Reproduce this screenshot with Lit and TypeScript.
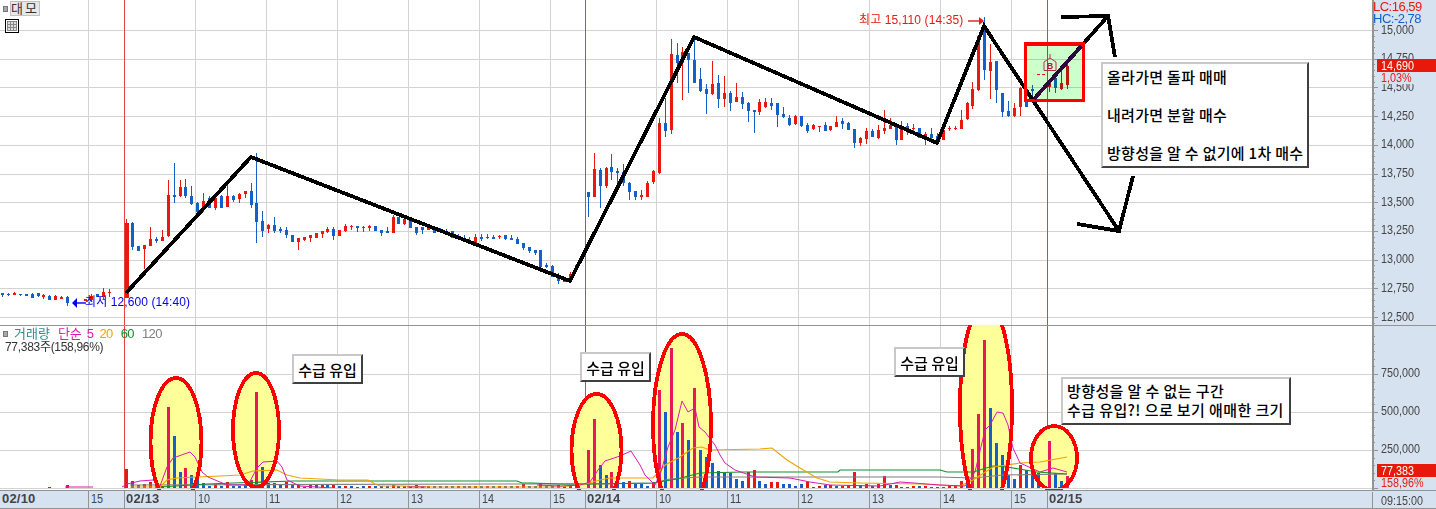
import { LitElement, html, svg, css } from 'lit';
import { customElement } from 'lit/decorators.js';

const RED = '#e8190e';
const BLUE = '#1560c8';
const PINK = '#e6195a';

// candle spacing: 12 candles make one hour on the x axis
const cx = (i: number) => 126.3 + i * 5.917;

const VERTICALS = [88, 195, 266, 337, 408, 479, 550, 656, 727, 798, 869, 940, 1011];
const SESSIONS = [124, 585, 1047];
const PRICE_LABELS = ['15,000', '14,750', '14,500', '14,250', '14,000', '13,750', '13,500', '13,250', '13,000', '12,750', '12,500'];
const priceY = (k: number) => 30 + k * 28.7;

// [high, low, bodyTop, bodyBottom, red?] in pixels, first one is index -21
const CANDLES: (number[] | null)[] = [
  [293, 297, 293, 295, 0], [293, 296, 294, 295, 0], [292, 295, 293, 295, 1], [294, 296, 294, 295, 0],
  [294, 296, 294, 296, 0], [293, 298, 294, 298, 0], [293, 297, 293, 296, 0], [294, 299, 295, 297, 1],
  [295, 300, 296, 300, 0], [295, 300, 296, 300, 1], [296, 299, 297, 299, 1], [296, 306, 297, 303, 0],
  null, null,
  [299, 301, 299, 301, 1], [294, 301, 296, 300, 1], [294, 297, 294, 297, 0], [288, 299, 292, 297, 1],
  [289, 297, 292, 293, 1], null, null,
  // 02/13
  [219, 298, 223, 298, 1], [222, 250, 223, 247, 0], [246, 251, 246, 251, 0], [245, 269, 245, 249, 1],
  [227, 246, 239, 246, 1], [237, 243, 239, 241, 0], [230, 241, 237, 241, 1], [180, 237, 195, 236, 1],
  [163, 203, 195, 197, 0], [180, 197, 187, 196, 1], [179, 198, 187, 196, 0], [186, 205, 196, 204, 0],
  [202, 213, 203, 212, 0], [193, 212, 201, 208, 1], [196, 208, 198, 208, 0], [197, 210, 198, 208, 1],
  [195, 208, 196, 208, 0], [185, 207, 196, 207, 1], [195, 202, 196, 200, 0], [193, 203, 194, 199, 1],
  [191, 198, 191, 194, 1], [183, 208, 191, 205, 0], [153, 243, 203, 222, 0], [211, 237, 221, 231, 0],
  [224, 233, 225, 229, 1], [217, 233, 225, 231, 0], [227, 233, 229, 231, 0], [227, 238, 230, 235, 0],
  [235, 242, 235, 242, 0], [238, 250, 238, 242, 1], [237, 241, 237, 240, 1], [235, 242, 235, 238, 1],
  [233, 238, 233, 238, 1], [231, 238, 231, 234, 1], [227, 233, 229, 232, 1], [227, 240, 229, 236, 0],
  [230, 236, 230, 236, 1], [224, 232, 226, 231, 1], [225, 230, 226, 227, 1], [226, 232, 226, 228, 0],
  [226, 232, 227, 228, 0], [225, 231, 226, 228, 1], [226, 231, 226, 231, 0], [230, 236, 230, 233, 0],
  [227, 233, 231, 233, 0], [215, 233, 217, 233, 1], [217, 224, 217, 224, 0], [217, 225, 219, 224, 1],
  [219, 228, 220, 228, 0], [227, 235, 227, 233, 0], [227, 234, 227, 230, 0], [227, 230, 227, 230, 1],
  [228, 233, 228, 233, 0], [228, 232, 230, 232, 0], [229, 235, 231, 233, 0], [231, 238, 231, 238, 0],
  [234, 240, 236, 238, 0], [235, 242, 238, 241, 0], [237, 242, 240, 242, 0], [234, 245, 237, 243, 1],
  [234, 241, 237, 239, 0], [234, 239, 237, 238, 1], [235, 239, 237, 239, 0], [235, 239, 236, 237, 1],
  [235, 240, 235, 239, 0], [235, 240, 238, 240, 0], [237, 244, 239, 244, 0], [243, 250, 243, 248, 0],
  [247, 253, 247, 251, 0], [250, 255, 250, 253, 0], [250, 267, 250, 267, 0], [263, 268, 265, 267, 0],
  [265, 277, 266, 277, 0], [273, 284, 277, 281, 0], [278, 282, 278, 282, 1], [272, 280, 274, 280, 1],
  [265, 266, 265, 266, 1], null,
  // 02/14
  [192, 217, 192, 197, 0], [153, 197, 169, 197, 1], [168, 208, 170, 186, 0], [167, 188, 168, 186, 1],
  [154, 180, 167, 172, 0], [168, 187, 171, 173, 0], [164, 186, 172, 183, 0], [182, 200, 183, 192, 0],
  [191, 200, 191, 197, 0], [190, 200, 195, 197, 1], [181, 197, 183, 197, 1], [170, 184, 171, 182, 1],
  [118, 174, 123, 173, 1], [98, 137, 123, 131, 0], [39, 134, 54, 130, 1], [43, 83, 55, 63, 0],
  [47, 100, 52, 63, 1], [53, 93, 53, 60, 0], [38, 83, 60, 83, 0], [68, 92, 79, 91, 0],
  [84, 114, 89, 94, 0], [61, 95, 84, 94, 1], [75, 108, 83, 99, 0], [76, 107, 93, 99, 1],
  [91, 111, 93, 103, 0], [83, 102, 97, 102, 1], [92, 109, 97, 104, 0], [102, 122, 103, 111, 0],
  [110, 133, 110, 112, 0], [99, 115, 102, 112, 1], [98, 108, 102, 107, 1], [98, 110, 103, 106, 0],
  [103, 127, 103, 115, 0], [107, 118, 114, 117, 0], [115, 126, 118, 125, 0], [115, 125, 116, 124, 1],
  [116, 127, 116, 126, 0], [123, 133, 125, 131, 0], [124, 130, 125, 129, 1], [126, 132, 126, 127, 1],
  [122, 131, 125, 131, 0], [126, 131, 126, 130, 1], [116, 127, 122, 127, 1], [118, 129, 121, 124, 0],
  [122, 130, 123, 130, 0], [129, 148, 129, 143, 0], [137, 146, 138, 143, 1], [128, 144, 131, 139, 1],
  [129, 137, 131, 137, 0], [125, 139, 130, 138, 1], [110, 134, 128, 131, 1], [118, 129, 125, 129, 1],
  [125, 145, 125, 140, 0], [121, 140, 128, 140, 1], [123, 135, 126, 129, 0], [124, 133, 128, 129, 1],
  [128, 138, 128, 138, 0], [132, 145, 134, 139, 1], [128, 142, 134, 138, 0], [133, 143, 136, 140, 0],
  [130, 140, 130, 140, 1], [126, 131, 128, 129, 1], [126, 130, 128, 129, 1], [110, 129, 120, 129, 1],
  [102, 120, 103, 119, 1], [82, 109, 89, 106, 1], [36, 91, 36, 90, 1], [17, 80, 28, 70, 0],
  [44, 99, 62, 71, 1], [61, 103, 61, 90, 0], [93, 117, 93, 112, 0], [101, 117, 111, 116, 0],
  [103, 117, 108, 116, 1], [87, 116, 88, 107, 1], [101, 107, 101, 107, 0], [85, 99, 89, 91, 0],
  null, null,
  // 02/15
  [80, 92, 82, 87, 1], [75, 93, 78, 88, 0], [71, 90, 83, 89, 1], [62, 89, 66, 85, 1],
];

// volume bar tops for indexes 0..39, 74..159, the rest fall back to a small bar
const BAR_TOPS: Record<number, [number, string]> = {
  [-13]: [487, RED], [-10]: [485, RED],
  0: [469, RED], 1: [481, BLUE], 2: [485, BLUE], 3: [484, RED], 4: [482, RED], 5: [485, BLUE], 6: [486, RED],
  7: [407, PINK], 8: [436, BLUE], 9: [472, BLUE], 10: [468, PINK], 11: [475, BLUE], 12: [479, BLUE], 13: [483, BLUE],
  14: [486, BLUE], 15: [484, RED], 16: [486, BLUE], 17: [482, RED], 18: [486, BLUE], 19: [486, BLUE], 20: [485, BLUE],
  21: [480, PINK], 22: [392, PINK], 23: [467, BLUE], 24: [483, BLUE], 25: [483, BLUE], 26: [485, BLUE], 27: [482, RED],
  28: [484, BLUE], 29: [484, RED], 30: [487, BLUE], 31: [485, RED], 32: [485, BLUE], 33: [485, RED], 34: [485, BLUE],
  35: [485, RED], 36: [486, BLUE], 37: [486, RED], 38: [486, BLUE], 39: [487, BLUE],
  45: [485, RED], 49: [485, RED], 56: [486, RED], 66: [486, RED], 67: [484, RED], 70: [483, RED], 73: [485, RED],
  75: [485, RED], 78: [450, PINK], 79: [419, PINK], 80: [465, BLUE], 81: [475, BLUE], 82: [472, PINK], 83: [483, BLUE],
  84: [482, BLUE], 85: [481, RED], 86: [484, BLUE], 87: [484, BLUE], 88: [486, BLUE], 89: [482, RED], 90: [390, PINK],
  91: [412, BLUE], 92: [348, PINK], 93: [432, BLUE], 94: [423, PINK], 95: [440, BLUE], 96: [388, PINK], 97: [450, BLUE],
  98: [457, BLUE], 99: [463, BLUE], 100: [471, BLUE], 101: [473, BLUE], 102: [473, BLUE], 103: [479, BLUE], 104: [481, BLUE],
  105: [472, RED], 106: [470, RED], 107: [481, BLUE], 108: [484, BLUE], 109: [482, RED], 110: [482, RED], 111: [484, BLUE],
  112: [484, BLUE], 113: [486, BLUE], 114: [484, BLUE], 115: [482, RED], 116: [487, BLUE], 117: [486, RED], 118: [485, BLUE],
  119: [485, RED], 120: [486, BLUE], 121: [486, RED], 122: [485, RED], 123: [472, RED], 124: [485, BLUE], 125: [484, RED],
  126: [486, BLUE], 127: [484, RED], 128: [476, RED], 129: [485, BLUE], 130: [485, RED], 131: [487, BLUE], 132: [487, BLUE],
  133: [486, RED], 134: [486, BLUE], 135: [486, RED], 136: [487, BLUE], 137: [487, BLUE], 138: [487, RED], 139: [486, RED],
  140: [486, RED], 141: [481, RED], 142: [483, BLUE], 143: [449, PINK], 144: [414, PINK], 145: [340, PINK], 146: [408, BLUE],
  147: [443, BLUE], 148: [455, BLUE], 149: [475, BLUE], 150: [479, BLUE], 151: [465, RED], 152: [470, BLUE], 153: [472, BLUE],
  154: [473, BLUE], 155: [485, BLUE], 156: [441, PINK], 157: [473, BLUE], 158: [481, BLUE], 159: [476, PINK],
};

const MA5 = [
  '65,487 93,487',
  '122,487 127,484 140,481 153,480 160,486 167,467 173,458 190,452 195,457 202,472 208,477 227,485 248,485 257,468 263,462 277,461 282,467 287,480 300,486 333,488',
  '407,487 426,487',
  '537,485 560,486 580,485 590,482 598,470 605,461 620,456 631,451 640,465 645,475 655,485 660,475 668,447 675,430 682,401 688,412 695,408 699,427 705,432 715,445 720,455 725,463 735,470 755,477 790,478 810,482 830,485 880,486 900,482 940,485 965,486 975,472 985,430 990,425 997,412 1003,413 1008,425 1013,448 1020,463 1040,472 1053,468 1067,472',
];
const MA20 = '130,487 160,487 167,480 177,478 197,477 220,476 240,475 253,471 277,470 287,475 300,478 340,480 368,480 375,484 380,486 402,486 430,487 560,487 585,484 600,480 610,478 653,478 665,465 680,457 693,448 702,447 710,450 760,449 772,448 787,460 800,468 817,478 830,482 860,483 920,484 960,486 973,480 993,467 1020,463 1040,462 1067,457';
const MA60 = '160,487 207,484 233,483 293,481 360,481 517,481 522,483 532,483 560,484 587,484 653,483 677,479 700,473 743,472 838,472 840,470 940,470 947,472 973,472 993,466 1007,467 1037,472 1067,474';
const MA120 = '130,485 500,484 600,484 653,483 670,479 700,477 860,477 940,477 973,478 1003,475 1067,474';

// [cx, cy, rx, ry] of the hand drawn volume circles
const ELLIPSES = [
  [176, 442, 25.5, 64],
  [256, 430, 23, 57],
  [596.5, 450, 25, 56],
  [682, 425, 29, 91],
  [986, 407, 26, 104],
  [1054, 458, 23, 32],
];

const X_LABELS: [number, string, boolean][] = [
  [0, '02/10', true], [88, '15', false], [124, '02/13', true], [195, '10', false], [266, '11', false],
  [337, '12', false], [408, '13', false], [479, '14', false], [550, '15', false], [585, '02/14', true],
  [656, '10', false], [727, '11', false], [798, '12', false], [869, '13', false], [940, '14', false],
  [1011, '15', false], [1047, '02/15', true],
];

// the chart's bitmap font is tall and narrow, so squeeze the numbers
const narrow = (cls: string, x: number, y: number, label: string) =>
  svg`<text class=${cls} transform="translate(${x} ${y}) scale(0.83 1)">${label}</text>`;

@customElement('app-root')
export class AppRoot extends LitElement {
  static styles = css`
    :host {
      display: block;
      width: 1436px;
      height: 509px;
      overflow: hidden;
      background: #fff;
      font-family: 'Liberation Sans', 'Noto Sans CJK KR', sans-serif;
    }
    .frame {
      position: relative;
      display: grid;
      grid-template-columns: 1372px 64px;
      grid-template-rows: 325px 165px 19px;
    }
    svg {
      display: block;
    }
    .grid {
      stroke: #d3d3d3;
      stroke-width: 1;
      shape-rendering: crispEdges;
    }
    .session {
      stroke-width: 1;
      shape-rendering: crispEdges;
    }
    .crisp {
      shape-rendering: crispEdges;
    }
    .hand {
      fill: none;
      stroke: #000;
      stroke-width: 3.8;
      stroke-linejoin: miter;
      shape-rendering: crispEdges;
    }
    .tint {
      fill: #ccffcc;
      mix-blend-mode: multiply;
    }
    .redbox {
      fill: none;
      stroke: #ff0000;
      stroke-width: 3.4;
      shape-rendering: crispEdges;
    }
    .blob {
      fill: #ffff99;
    }
    .blob-line {
      fill: none;
      stroke: #ff0000;
      stroke-width: 3.8;
      shape-rendering: crispEdges;
    }
    .ma {
      fill: none;
      stroke-width: 1;
    }
    .m5 { stroke: #d81bb0; }
    .m20 { stroke: #f0a400; stroke-width: 1.2; }
    .m60 { stroke: #109030; stroke-width: 1.2; }
    .m120 { stroke: #808080; stroke-width: 1.2; }
    .axisbg {
      fill: #d6e2f0;
    }
    .axisline {
      stroke: #939393;
      stroke-width: 1;
      shape-rendering: crispEdges;
    }
    .axisline.heavy {
      stroke-width: 2;
    }
    text {
      font-family: 'Liberation Sans', 'Noto Sans CJK KR', sans-serif;
    }
    .tick {
      font-size: 13px;
      fill: #444;
    }
    .tick.bold {
      font-weight: 700;
      letter-spacing: 0.2px;
    }
    .flag {
      fill: #e8190a;
    }
    .flagtext {
      font-size: 13px;
      fill: #fff;
    }
    .redtext {
      font-size: 13px;
      fill: #e8190e;
    }
    .lc {
      font-size: 13px;
      letter-spacing: -0.5px;
      fill: #e8190e;
    }
    .hc {
      font-size: 13px;
      letter-spacing: -0.5px;
      fill: #1560c8;
    }
    .hilo {
      font-size: 12px;
      letter-spacing: 0.1px;
    }
    .buy {
      font-size: 9px;
      font-weight: 700;
      fill: #c0104a;
      text-anchor: middle;
    }
    .toolbar {
      position: absolute;
      left: 3px;
      top: 1px;
      display: flex;
      align-items: center;
      gap: 2px;
    }
    .dot {
      width: 3px;
      height: 4px;
      background: #a8a8a8;
      border: 1px solid #777;
    }
    .btn {
      width: 28px;
      height: 13px;
      border: 1px solid #c2c2c2;
      background: #e8e8e8;
      color: #333;
      font-size: 13px;
      line-height: 13px;
      text-align: center;
      letter-spacing: 2px;
    }
    .table-icon {
      position: absolute;
      left: 5px;
      top: 19px;
    }
    .legend {
      position: absolute;
      left: 3px;
      top: 327px;
      display: flex;
      flex-direction: column;
      font-size: 13px;
      line-height: 14px;
    }
    .legend-row {
      display: flex;
      align-items: center;
      gap: 8px;
    }
    .legend .dot {
      margin-right: -2px;
    }
    .legend .num {
      letter-spacing: -0.6px;
    }
    .legend .five {
      margin: 0 -2px 0 -3px;
    }
    .legend .now {
      margin-left: 2px;
      font-size: 12px;
      line-height: 12px;
      color: #333;
      letter-spacing: -0.3px;
    }
    .teal { color: #2a9090; }
    .mag { color: #d81bb0; }
    .org { color: #f0a400; }
    .grn { color: #109030; }
    .gry { color: #808080; }
    .note {
      position: absolute;
      box-sizing: border-box;
      background: #fff;
      border: 2px solid;
      border-color: #c8c8c8 #404040 #404040 #c8c8c8;
      font-family: 'Noto Sans CJK KR', sans-serif;
      font-size: 15px;
      font-weight: 500;
      line-height: 19px;
      color: #000;
      display: flex;
      flex-direction: column;
    }
    .note.plan {
      left: 1101px;
      top: 62px;
      width: 208px;
      height: 106px;
      padding: 3px 0 0 4px;
      gap: 19px;
      letter-spacing: 0.3px;
    }
    .note.flow {
      width: 71px;
      height: 30px;
      align-items: center;
      justify-content: center;
    }
    .note.f1 { left: 292px; top: 354px; }
    .note.f2 { left: 580px; top: 352px; }
    .note.f3 { left: 894px; top: 347px; }
    .note.unknown {
      left: 1061px;
      top: 377px;
      width: 230px;
      height: 48px;
      padding: 2px 0 0 4px;
      letter-spacing: 0.4px;
    }
    .clock {
      box-sizing: border-box;
      background: #d6e2f0;
      border-top: 1px solid #939393;
      border-bottom: 1px solid #939393;
      font-size: 13px;
      line-height: 17px;
      color: #444;
      display: flex;
    }
    .clock div {
      margin-top: 1px;
      height: 16px;
      padding-left: 8px;
      border-left: 1px solid #939393;
    }
    .clock span {
      display: inline-block;
      transform: scaleX(0.83);
      transform-origin: left;
    }
  `;

  // shared background of both panes
  renderGrid(hLines: number[], top: number, bottom: number) {
    return svg`
      ${hLines.map((y) => svg`<line class="grid" x1="0" x2="1372" y1=${y + 0.5} y2=${y + 0.5}></line>`)}
      ${VERTICALS.map((x) => svg`<line class="grid" x1=${x + 0.5} x2=${x + 0.5} y1=${top} y2=${bottom}></line>`)}
      ${SESSIONS.map((x, n) => svg`<line class="session" stroke=${n === 0 ? '#e84040' : '#b85050'} x1=${x + 0.5} x2=${x + 0.5} y1=${top} y2=${bottom}></line>`)}
    `;
  }

  renderCandles() {
    return CANDLES.map((c, n) => {
      if (!c) return null;
      const x = Math.round(cx(n - 21));
      const color = c[4] ? RED : BLUE;
      const w = n - 21 === 0 ? 4 : 3;
      return svg`
        <rect class="crisp" fill=${color} x=${x} y=${c[0]} width="1" height=${c[1] - c[0]}></rect>
        <rect class="crisp" fill=${color} x=${x - 1} y=${c[2]} width=${w} height=${Math.max(c[3] - c[2], 1)}></rect>
      `;
    });
  }

  renderBars() {
    const out = [];
    for (let i = -21; i < 160; i++) {
      const c = CANDLES[i + 21];
      let bar = BAR_TOPS[i];
      if (!bar && i >= 40 && i < 78 && c) bar = [486, c[4] ? RED : BLUE];
      if (!bar) continue;
      out.push(svg`<rect class="crisp" fill=${bar[1]} x=${Math.round(cx(i)) - 1} y=${bar[0]} width="3" height=${488 - bar[0]}></rect>`);
    }
    return out;
  }

  renderMainPane() {
    return html`
      <svg width="1372" height="325" viewBox="0 0 1372 325">
        ${this.renderGrid(PRICE_LABELS.map((_, k) => Math.round(priceY(k))), 0, 325)}
        ${this.renderCandles()}

        <!-- low / high marks -->
        <polygon points="72,303 77,298 77,308" fill="#0000f0"></polygon>
        <line x1="76" x2="86" y1="303" y2="303" stroke="#0000f0" stroke-width="1.4"></line>
        <text class="hilo" x="85" y="306" fill="#0000f0">최저 12,600 (14:40)</text>
        <text class="hilo" x="859" y="24" fill="#e8190e">최고 15,110 (14:35)</text>
        <line x1="968" x2="980" y1="21" y2="21" stroke="#e8190e" stroke-width="1.4"></line>
        <polygon points="984,21 979,17 979,25" fill="#e8190e"></polygon>

        <!-- the drawn trend lines -->
        <polyline class="hand" points="126,293 251,157 570,281 694,37 937,143 984,26 1119,231"></polyline>
        <polyline class="hand" points="1077,224 1119,231 1133,176"></polyline>
        <polyline class="hand" points="1034,99 1108,16"></polyline>
        <polyline class="hand" points="1061,17 1108,16 1115,57"></polyline>

        <!-- buy zone -->
        <rect class="tint" x="1025" y="44" width="58" height="56"></rect>
        <polygon points="1050,58 1056,62 1056,70.5 1044,70.5 1044,62" fill="none" stroke="#b03050"></polygon>
        <line x1="1050" x2="1050" y1="54" y2="58" stroke="#b03050"></line>
        <text class="buy" x="1050" y="69">B</text>
        <line x1="1037" x2="1040" y1="74.5" y2="74.5" stroke="#e8190e"></line>
        <line x1="1042" x2="1045" y1="74.5" y2="74.5" stroke="#e8190e"></line>
        <rect class="redbox" x="1025.5" y="44" width="58" height="56.5"></rect>
        <line class="crisp" x1="1034" x2="1081.5" y1="99" y2="46" stroke="#2c0a3c" stroke-width="3.8"></line>
      </svg>
    `;
  }

  renderPriceAxis() {
    const ticks = [];
    for (let k = -1; k < 11; k++) {
      for (let m = 0; m < 5; m++) {
        const y = Math.round(priceY(k) + (m * 28.7) / 5);
        if (y < 24) continue;
        ticks.push(svg`<line class="axisline" x1="1372" x2=${m === 0 ? 1378 : 1375} y1=${y + 0.5} y2=${y + 0.5}></line>`);
      }
    }
    return html`
      <svg width="64" height="325" viewBox="1372 0 64 325">
        <rect class="axisbg" x="1372" y="0" width="64" height="325"></rect>
        <line class="axisline heavy" x1="1373" x2="1373" y1="0" y2="325"></line>
        ${ticks}
        ${PRICE_LABELS.map((label, k) => narrow('tick', 1381, priceY(k) + 3.5, label))}
        <rect class="axisbg" x="1375" y="0" width="61" height="25"></rect>
        <text class="lc" x="1373" y="11">LC:16,59</text>
        <text class="hc" x="1373" y="23">HC:-2,78</text>
        <rect class="axisbg" x="1377" y="72" width="59" height="12"></rect>
        <rect class="flag" x="1377" y="59" width="59" height="13"></rect>
        ${narrow('flagtext', 1381, 70, '14,690')}
        ${narrow('redtext', 1381, 82, '1,03%')}
      </svg>
    `;
  }

  renderVolumePane() {
    return html`
      <svg width="1372" height="165" viewBox="0 325 1372 165">
        ${this.renderGrid([374, 412, 450], 325, 488)}
        <line class="axisline" x1="0" x2="1372" y1="325.5" y2="325.5"></line>
        ${ELLIPSES.map((e) => svg`<ellipse class="blob" cx=${e[0]} cy=${e[1]} rx=${e[2]} ry=${e[3]}></ellipse>`)}
        ${this.renderBars()}
        <polyline class="ma m120" points=${MA120}></polyline>
        <polyline class="ma m60" points=${MA60}></polyline>
        <polyline class="ma m20" points=${MA20}></polyline>
        ${MA5.map((p) => svg`<polyline class="ma m5" points=${p}></polyline>`)}
        ${ELLIPSES.map((e) => svg`<ellipse class="blob-line" cx=${e[0]} cy=${e[1]} rx=${e[2]} ry=${e[3]}></ellipse>`)}
        <line class="grid" x1="0" x2="1372" y1="488.5" y2="488.5"></line>
      </svg>
    `;
  }

  renderVolumeAxis() {
    const labels: [number, string][] = [[374, '750,000'], [412, '500,000'], [450, '250,000']];
    const ticks = [];
    for (let y = 336; y < 489; y += 7.6) {
      const major = labels.some((l) => Math.abs(l[0] - y) < 1) || y > 487;
      ticks.push(svg`<line class="axisline" x1="1372" x2=${major ? 1378 : 1375} y1=${Math.round(y) + 0.5} y2=${Math.round(y) + 0.5}></line>`);
    }
    return html`
      <svg width="64" height="165" viewBox="1372 325 64 165">
        <rect class="axisbg" x="1372" y="325" width="64" height="165"></rect>
        <line class="axisline heavy" x1="1373" x2="1373" y1="325" y2="490"></line>
        <line class="axisline" x1="1372" x2="1436" y1="325.5" y2="325.5"></line>
        ${ticks}
        ${labels.map((l) => narrow('tick', 1381, l[0] + 3, l[1]))}
        <rect class="flag" x="1377" y="464" width="59" height="13"></rect>
        ${narrow('flagtext', 1381, 475, '77,383')}
        ${narrow('redtext', 1381, 487, '158,96%')}
      </svg>
    `;
  }

  renderTimeAxis() {
    return html`
      <svg width="1372" height="19" viewBox="0 490 1372 19">
        <rect class="axisbg" x="0" y="490" width="1372" height="19"></rect>
        <line class="axisline" x1="0" x2="1372" y1="490.5" y2="490.5"></line>
        <line class="axisline" x1="0" x2="1372" y1="508.5" y2="508.5"></line>
        ${X_LABELS.map(([x, label, bold]) => svg`
          ${x > 0 ? svg`<line class="axisline" x1=${x + 0.5} x2=${x + 0.5} y1="490" y2="508"></line>` : null}
          ${bold
            ? svg`<text class="tick bold" x=${x + 2} y="503">${label}</text>`
            : narrow('tick', x + 3, 503, label)}
        `)}
      </svg>
    `;
  }

  render() {
    return html`
      <div class="frame">
        ${this.renderMainPane()}
        ${this.renderPriceAxis()}
        ${this.renderVolumePane()}
        ${this.renderVolumeAxis()}
        ${this.renderTimeAxis()}
        <div class="clock"><div><span>09:15:00</span></div></div>

        <div class="toolbar"><div class="dot"></div><div class="btn">대모</div></div>
        <svg class="table-icon" width="14" height="14" viewBox="0 0 14 14">
          <rect x="0.5" y="0.5" width="13" height="13" fill="#fff" stroke="#000"></rect>
          <rect x="2.5" y="2.5" width="9" height="9" fill="#ddd" stroke="#888"></rect>
          <path d="M5.5 2.5v9M8.5 2.5v9M2.5 5.5h9M2.5 8.5h9" stroke="#888" fill="none"></path>
        </svg>

        <div class="legend">
          <div class="legend-row">
            <div class="dot"></div>
            <span class="teal">거래량</span>
            <span class="mag">단순</span>
            <span class="mag num five">5</span>
            <span class="org num">20</span>
            <span class="grn num">60</span>
            <span class="gry num">120</span>
          </div>
          <div class="now">77,383주(158,96%)</div>
        </div>

        <div class="note plan">
          <div>올라가면 돌파 매매</div>
          <div>내려가면 분할 매수</div>
          <div>방향성을 알 수 없기에 1차 매수</div>
        </div>
        <div class="note flow f1">수급 유입</div>
        <div class="note flow f2">수급 유입</div>
        <div class="note flow f3">수급 유입</div>
        <div class="note unknown">
          <div>방향성을 알 수 없는 구간</div>
          <div>수급 유입?! 으로 보기 애매한 크기</div>
        </div>
      </div>
    `;
  }
}
